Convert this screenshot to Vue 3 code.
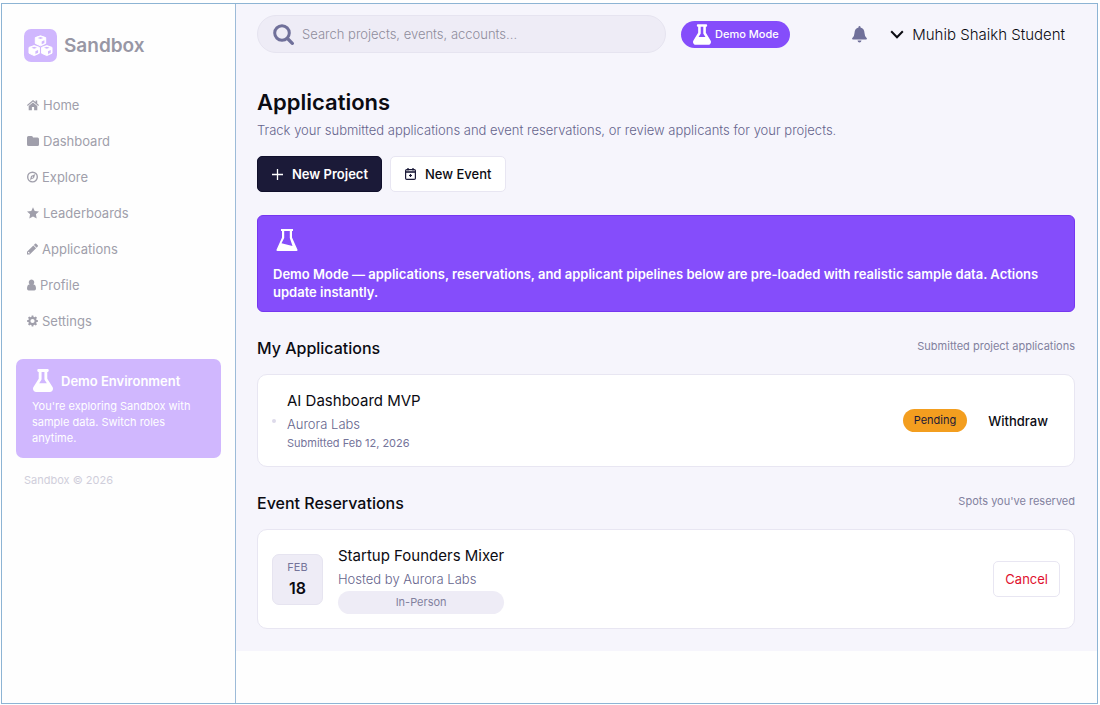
<script setup>
import { ref } from 'vue';

const search = ref('');

// w / h are the drawn size, the glyphs are not all equally wide
const navItems = [
  {
    label: 'Home',
    w: 12,
    h: 12,
    box: '0 0 12 12',
    path: 'M6 1 0 6.1l.7.8L6 2.5l5.3 4.4.7-.8-1.8-1.6V1.4H8.6v1.7zM6 3.5 1.7 7v4.2h3.2V8h2.2v3.2h3.2V7z'
  },
  {
    label: 'Dashboard',
    w: 12,
    h: 12,
    box: '0 0 12 12',
    path: 'M1.5 1h3Q6 1 6 2.5h4.5Q12 2.500 12 4v5.500Q12 11 10.500 11h-9Q0 11 0 9.500v-7Q0 1 1.500 1z'
  },
  {
    label: 'Explore',
    w: 11,
    h: 12,
    box: '0 0 12 12',
    path: 'M6 0a6 6 0 1 0 0 12A6 6 0 0 0 6 0zm0 1.500a4.500 4.500 0 1 1 0 9 4.500 4.500 0 0 1 0-9zM9 2.600 4.400 4.900 3.200 9.300 7.700 7zM6 5.200l.9 1.200-1.900.9z'
  },
  {
    label: 'Leaderboards',
    w: 12,
    h: 12,
    box: '0 0 12 12',
    path: 'm6 .2 1.700 3.700 4.300.5-3.100 2.900.8 4.300L6 9.500l-3.700 2.100.8-4.300L0 4.400l4.300-.5z'
  },
  {
    label: 'Applications',
    w: 11,
    h: 12,
    box: '0 0 12 12',
    path: 'M0 12V9L6.900 2.100l3 3L3 12zM1.100 9.500v.9h.6v.6h.8l.6-.6-1.400-1.500zM7.500 1.500 8.700.3q.7-.6 1.400 0l1.600 1.600q.6.7 0 1.400l-1.200 1.200z'
  },
  {
    label: 'Profile',
    w: 9,
    h: 12,
    box: '0 0 9 12',
    path: 'M4.500.5a2.800 2.900 0 0 1 1.900 5Q9 5.700 9 9.600q0 1.900-1.700 1.900H1.700Q0 11.500 0 9.600q0-3.900 2.600-4.100A2.800 2.900 0 0 1 4.500.5z'
  },
  {
    label: 'Settings',
    w: 11,
    h: 12,
    box: '0 0 12 12',
    path: 'M5.100 0h1.800l.3 1.600 1 .4 1.400-.9 1.300 1.300L10 3.800l.4 1 1.600.3v1.800l-1.600.3-.4 1 .9 1.400-1.300 1.300-1.400-.9-1 .4-.3 1.600H5.100l-.3-1.600-1-.4-1.400.9-1.300-1.300.9-1.400-.4-1L0 6.900V5.100l1.600-.3.4-1-.9-1.400 1.300-1.300 1.400.9 1-.4zM6 3.700a2.300 2.300 0 1 0 0 4.600 2.300 2.300 0 0 0 0-4.600z'
  }
];

const applications = ref([
  { id: 1, title: 'AI Dashboard MVP', org: 'Aurora Labs', submitted: 'Submitted Feb 12, 2026', status: 'Pending' }
]);

const reservations = ref([
  { id: 1, month: 'FEB', day: '18', title: 'Startup Founders Mixer', host: 'Hosted by Aurora Labs', format: 'In-Person' }
]);

const flaskPath =
  'M437 403 320 215V64h8q24 0 24-24V24q0-24-24-24H120Q96 0 96 24v16q0 24 24 24h8v151L11 403C-18 450 15 512 71 512h306c56 0 89-62 60-109zM138 320l48-78q6-8 6-18V64h64v160q0 10 6 18l48 78z';

const withdraw = (id) => {
  applications.value = applications.value.filter((a) => a.id !== id);
};

const cancelReservation = (id) => {
  reservations.value = reservations.value.filter((r) => r.id !== id);
};
</script>

<template>
  <div class="shell">
    <aside class="sidebar">
      <div class="brand">
        <span class="brand-logo">
          <svg width="25" height="22" viewBox="0 0 25 22" aria-hidden="true">
            <g fill="#fff" stroke="#fff" stroke-width="1" stroke-linejoin="round">
              <path d="m12.500 .8 5.200 1.800v5.800l-5.200 2.400-5.200-2.400V2.600z" />
              <path d="m6.200 10.600 5.200 1.800v5.800l-5.200 2.400L1 18.200v-5.800z" />
              <path d="m18.800 10.600 5.200 1.800v5.800l-5.200 2.400-5.200-2.400v-5.800z" />
            </g>
            <g fill="#d0b7fe">
              <path d="m12.500 2 2.800 1-2.800 1-2.800-1zM13.700 6.400l2.700-1.100v2.700l-2.700 1.200z" />
              <path d="m6.200 11.800 2.800 1-2.800 1-2.800-1zM7.400 16.200l2.700-1.100v2.700L7.400 19z" />
              <path d="m18.800 11.800 2.800 1-2.800 1-2.800-1zM20 16.200l2.700-1.100v2.700L20 19z" />
            </g>
          </svg>
        </span>
        <span class="brand-name">Sandbox</span>
      </div>

      <nav class="nav">
        <a v-for="item in navItems" :key="item.label" href="#" class="nav-link">
          <svg :width="item.w" :height="item.h" :viewBox="item.box" aria-hidden="true">
            <path :d="item.path" fill="currentColor" fill-rule="evenodd" />
          </svg>
          <span>{{ item.label }}</span>
        </a>
      </nav>

      <div class="env-card">
        <div class="env-head">
          <svg width="20" height="23" viewBox="0 0 448 512" aria-hidden="true">
            <path :d="flaskPath" fill="#fff" fill-rule="evenodd" />
          </svg>
          <strong>Demo Environment</strong>
        </div>
        <p>You're exploring Sandbox with sample data. Switch roles anytime.</p>
      </div>

      <footer class="copyright">Sandbox © 2026</footer>
    </aside>

    <main class="main">
      <!-- Top bar -->
      <header class="topbar">
        <label class="search">
          <svg width="21" height="21" viewBox="0 0 21 21" fill="none" stroke="#70709a" aria-hidden="true">
            <circle cx="9" cy="9" r="7.300" stroke-width="3" />
            <path d="m14.500 14.500 4.800 4.800" stroke-width="3.300" stroke-linecap="round" />
          </svg>
          <input v-model="search" type="text" placeholder="Search projects, events, accounts..." aria-label="Search" />
        </label>

        <span class="demo-pill">
          <svg width="18" height="21" viewBox="0 0 448 512" aria-hidden="true">
            <path :d="flaskPath" fill="#fff" fill-rule="evenodd" />
          </svg>
          Demo Mode
        </span>

        <button class="bell" type="button" aria-label="Notifications">
          <svg width="15" height="17" viewBox="0 0 15 17" aria-hidden="true">
            <path
              d="M7.500 0q1 0 1 1v.5Q12.300 2.300 12.500 7q.1 3.700 2.300 5.200.5 1.300-.8 1.300H1q-1.300 0-.8-1.300Q2.400 10.700 2.500 7q.2-4.700 4-5.500V1q0-1 1-1zM5.500 14.400h4q-.3 2-2 2t-2-2z"
              fill="#70709a"
            />
          </svg>
        </button>

        <button class="user-menu" type="button">
          <svg width="14" height="9" viewBox="0 0 14 9" fill="none" aria-hidden="true">
            <path d="m1.200 1.200 5.800 6 5.800-6" stroke="#0b0b12" stroke-width="2" />
          </svg>
          Muhib Shaikh Student
        </button>
      </header>

      <h1>Applications</h1>
      <p class="subtitle">
        Track your submitted applications and event reservations, or review applicants for your projects.
      </p>

      <div class="actions">
        <button class="btn btn-dark" type="button">
          <svg width="11" height="11" viewBox="0 0 11 11" fill="none" aria-hidden="true">
            <path d="M5.500 0v11M0 5.500h11" stroke="#fff" stroke-width="1.300" />
          </svg>
          New Project
        </button>
        <button class="btn btn-light" type="button">
          <svg width="11" height="12" viewBox="0 0 11 12" fill="none" stroke="#1b1a38" aria-hidden="true">
            <rect x=".6" y="1.600" width="9.800" height="9.800" rx="1.200" stroke-width="1.200" />
            <path d="M.6 4h9.800" stroke-width="1.600" />
            <path d="M3 0v2.500M8 0v2.500" stroke-width="1.300" />
            <path d="M5.500 6v3M4 7.500h3" stroke-width="1.200" />
          </svg>
          New Event
        </button>
      </div>

      <!-- Demo notice -->
      <div class="banner">
        <svg width="28" height="28" viewBox="0 0 28 28" aria-hidden="true">
          <path
            d="M8 3h12v2h-1v6.500l5.500 12.200Q24.800 25 23.500 25h-19q-1.300 0-1-1.300L9 11.500V5H8zm3.200 2v7l-2.700 5.200 11 2.800L16.800 12V5z"
            fill="#fff"
            fill-rule="evenodd"
          />
        </svg>
        <p>
          Demo Mode — applications, reservations, and applicant pipelines below are pre-loaded with realistic sample
          data. Actions update instantly.
        </p>
      </div>

      <section class="section">
        <div class="section-head">
          <h2>My Applications</h2>
          <span>Submitted project applications</span>
        </div>
        <article v-for="app in applications" :key="app.id" class="card">
          <span class="dot"></span>
          <div class="card-body">
            <h3>{{ app.title }}</h3>
            <p class="org">{{ app.org }}</p>
            <p class="meta">{{ app.submitted }}</p>
          </div>
          <span class="status">{{ app.status }}</span>
          <button class="btn btn-ghost" type="button" @click="withdraw(app.id)">Withdraw</button>
        </article>
      </section>

      <section class="section">
        <div class="section-head">
          <h2>Event Reservations</h2>
          <span>Spots you've reserved</span>
        </div>
        <article v-for="event in reservations" :key="event.id" class="card">
          <div class="date">
            <span class="date-month">{{ event.month }}</span>
            <span class="date-day">{{ event.day }}</span>
          </div>
          <div class="card-body">
            <h3>{{ event.title }}</h3>
            <p class="org">{{ event.host }}</p>
            <span class="format">{{ event.format }}</span>
          </div>
          <button class="btn btn-cancel" type="button" @click="cancelReservation(event.id)">Cancel</button>
        </article>
      </section>
    </main>
  </div>
</template>

<style>
body {
  background: #fff;
}
</style>

<style scoped>
.shell,
.shell * {
  box-sizing: border-box;
}

.shell {
  display: flex;
  align-items: stretch;
  min-height: calc(100vh - 4px);
  margin: 3px 2px 1px 1px;
  border: 1px solid #8db4d4;
  background: #fefefe;
  color: #0b0b12;
  font-family: Inter, "Liberation Sans", sans-serif;
  font-size: 13px;
}

h1,
h2,
h3,
p {
  margin: 0;
}

svg {
  display: block;
  flex-shrink: 0;
}

button,
input {
  font-family: inherit;
  color: inherit;
}

button {
  cursor: pointer;
}

/* Sidebar */
.sidebar {
  flex: 0 0 234px;
  padding: 25px 14px 16px;
  border-right: 1px solid #9dbbd8;
}

.brand {
  display: flex;
  align-items: center;
  gap: 7px;
  padding-left: 8px;
}

.brand-logo {
  display: flex;
  align-items: center;
  justify-content: center;
  width: 33px;
  height: 33px;
  border-radius: 7px;
  background: #d0b7fe;
}

.brand-name {
  font-size: 19px;
  font-weight: 600;
  color: #9897a5;
}

.nav {
  display: flex;
  flex-direction: column;
  margin-top: 25px;
}

.nav-link {
  display: flex;
  align-items: center;
  gap: 4px;
  height: 36px;
  padding-left: 11px;
  color: #a09fab;
  text-decoration: none;
}

.env-card {
  margin-top: 20px;
  padding: 10px 16px 12px;
  border-radius: 7px;
  background: #d0b7fe;
  color: #fff;
}

.env-head {
  display: flex;
  align-items: center;
  gap: 8px;
  padding-left: 1px;
  font-size: 13px;
}

.env-head strong {
  font-weight: 600;
}

.env-card p {
  margin-top: 6px;
  font-size: 11px;
  line-height: 16px;
}

.copyright {
  margin-top: 14px;
  padding-left: 8px;
  font-size: 11px;
  line-height: 16px;
  color: #d0cedb;
}

/* Main column */
.main {
  flex: 1;
  min-width: 0;
  align-self: flex-start;
  padding: 11px 22px 22px 21px;
  background: #f6f5fc;
}

.topbar {
  display: flex;
  align-items: center;
}

.search {
  display: flex;
  align-items: center;
  gap: 8px;
  flex: 0 1 50%;
  height: 38px;
  padding: 0 15px;
  border: 1px solid #e6e4f0;
  border-radius: 19px;
  background: #eeecf6;
}

.search input {
  flex: 1;
  min-width: 0;
  padding: 0;
  border: 0;
  outline: 0;
  background: transparent;
  font-size: 13px;
}

.search input::placeholder {
  color: #8f8d9c;
  font-weight: 300;
  opacity: 1;
}

.demo-pill {
  display: flex;
  align-items: center;
  gap: 4px;
  height: 27px;
  margin-left: 15px;
  padding: 0 11px 0 12px;
  border-radius: 14px;
  background: #854dfb;
  color: #fff;
  font-size: 11px;
  font-weight: 500;
  white-space: nowrap;
}

.bell {
  margin-left: auto;
  padding: 0;
  border: 0;
  background: transparent;
}

.user-menu {
  display: flex;
  align-items: center;
  gap: 8px;
  margin-left: 13px;
  padding: 0 10px;
  border: 0;
  background: transparent;
  font-size: 15px;
  font-weight: 300;
  white-space: nowrap;
}

h1 {
  margin-top: 34px;
  font-size: 22px;
  font-weight: 600;
  line-height: 30px;
}

.subtitle {
  margin-top: 3px;
  font-size: 13px;
  font-weight: 300;
  line-height: 20px;
  color: #65648c;
}

.actions {
  display: flex;
  gap: 8px;
  margin-top: 16px;
}

.btn {
  display: flex;
  align-items: center;
  gap: 9px;
  height: 36px;
  padding: 0 14px;
  border: 1px solid #e8e6f2;
  border-radius: 5px;
  background: #fff;
  font-size: 13px;
  font-weight: 500;
  white-space: nowrap;
}

.btn-dark {
  padding-right: 13px;
  border-color: #100f2b;
  background: #1b1a38;
  color: #fff;
  font-weight: 600;
}

.banner {
  margin-top: 23px;
  padding: 10px 15px;
  border: 1px solid #7636f0;
  border-radius: 6px;
  background: #854dfb;
  color: #fff;
}

.banner p {
  margin-top: 11px;
  font-size: 13px;
  font-weight: 600;
  line-height: 18px;
}

/* Sections */
.section {
  margin-top: 24px;
}

.section-head {
  display: flex;
  align-items: flex-start;
  justify-content: space-between;
  margin-bottom: 14px;
}

.section-head h2 {
  font-size: 16px;
  font-weight: 500;
  line-height: 24px;
}

.section-head span {
  font-size: 11px;
  line-height: 20px;
  color: #82819e;
}

.card {
  display: flex;
  align-items: center;
  padding: 14px;
  border: 1px solid #e8e6f2;
  border-radius: 10px;
  background: #fff;
}

.dot {
  width: 4px;
  height: 4px;
  margin-right: 11px;
  border-radius: 50%;
  background: #dddaea;
}

.card-body {
  margin-right: auto;
}

.card-body h3 {
  font-size: 15px;
  font-weight: 400;
  line-height: 24px;
}

.org {
  margin-top: 1px;
  font-size: 13px;
  font-weight: 300;
  line-height: 20px;
  color: #65648c;
}

.meta {
  font-size: 11px;
  line-height: 18px;
  color: #75749a;
}

.status {
  margin-right: 9px;
  padding: 0 11px;
  border-radius: 12px;
  background: #f39e1f;
  font-size: 11px;
  line-height: 23px;
  color: #1b1a38;
}

.btn-ghost {
  padding: 0 11px;
  border-color: transparent;
  background: transparent;
}

.btn-cancel {
  padding: 0 11px;
  color: #e0102e;
  font-weight: 400;
}

.date {
  display: flex;
  flex-direction: column;
  align-items: center;
  justify-content: center;
  width: 51px;
  height: 51px;
  margin-right: 15px;
  padding-bottom: 3px;
  border: 1px solid #e6e4f0;
  border-radius: 7px;
  background: #eeecf6;
}

.date-month {
  font-size: 11px;
  line-height: 20px;
  color: #75749a;
}

.date-day {
  font-size: 16px;
  font-weight: 600;
  line-height: 22px;
}

.format {
  display: block;
  margin-top: 2px;
  border-radius: 12px;
  background: #eeecf6;
  font-size: 11px;
  line-height: 23px;
  text-align: center;
  color: #82819e;
}
</style>
